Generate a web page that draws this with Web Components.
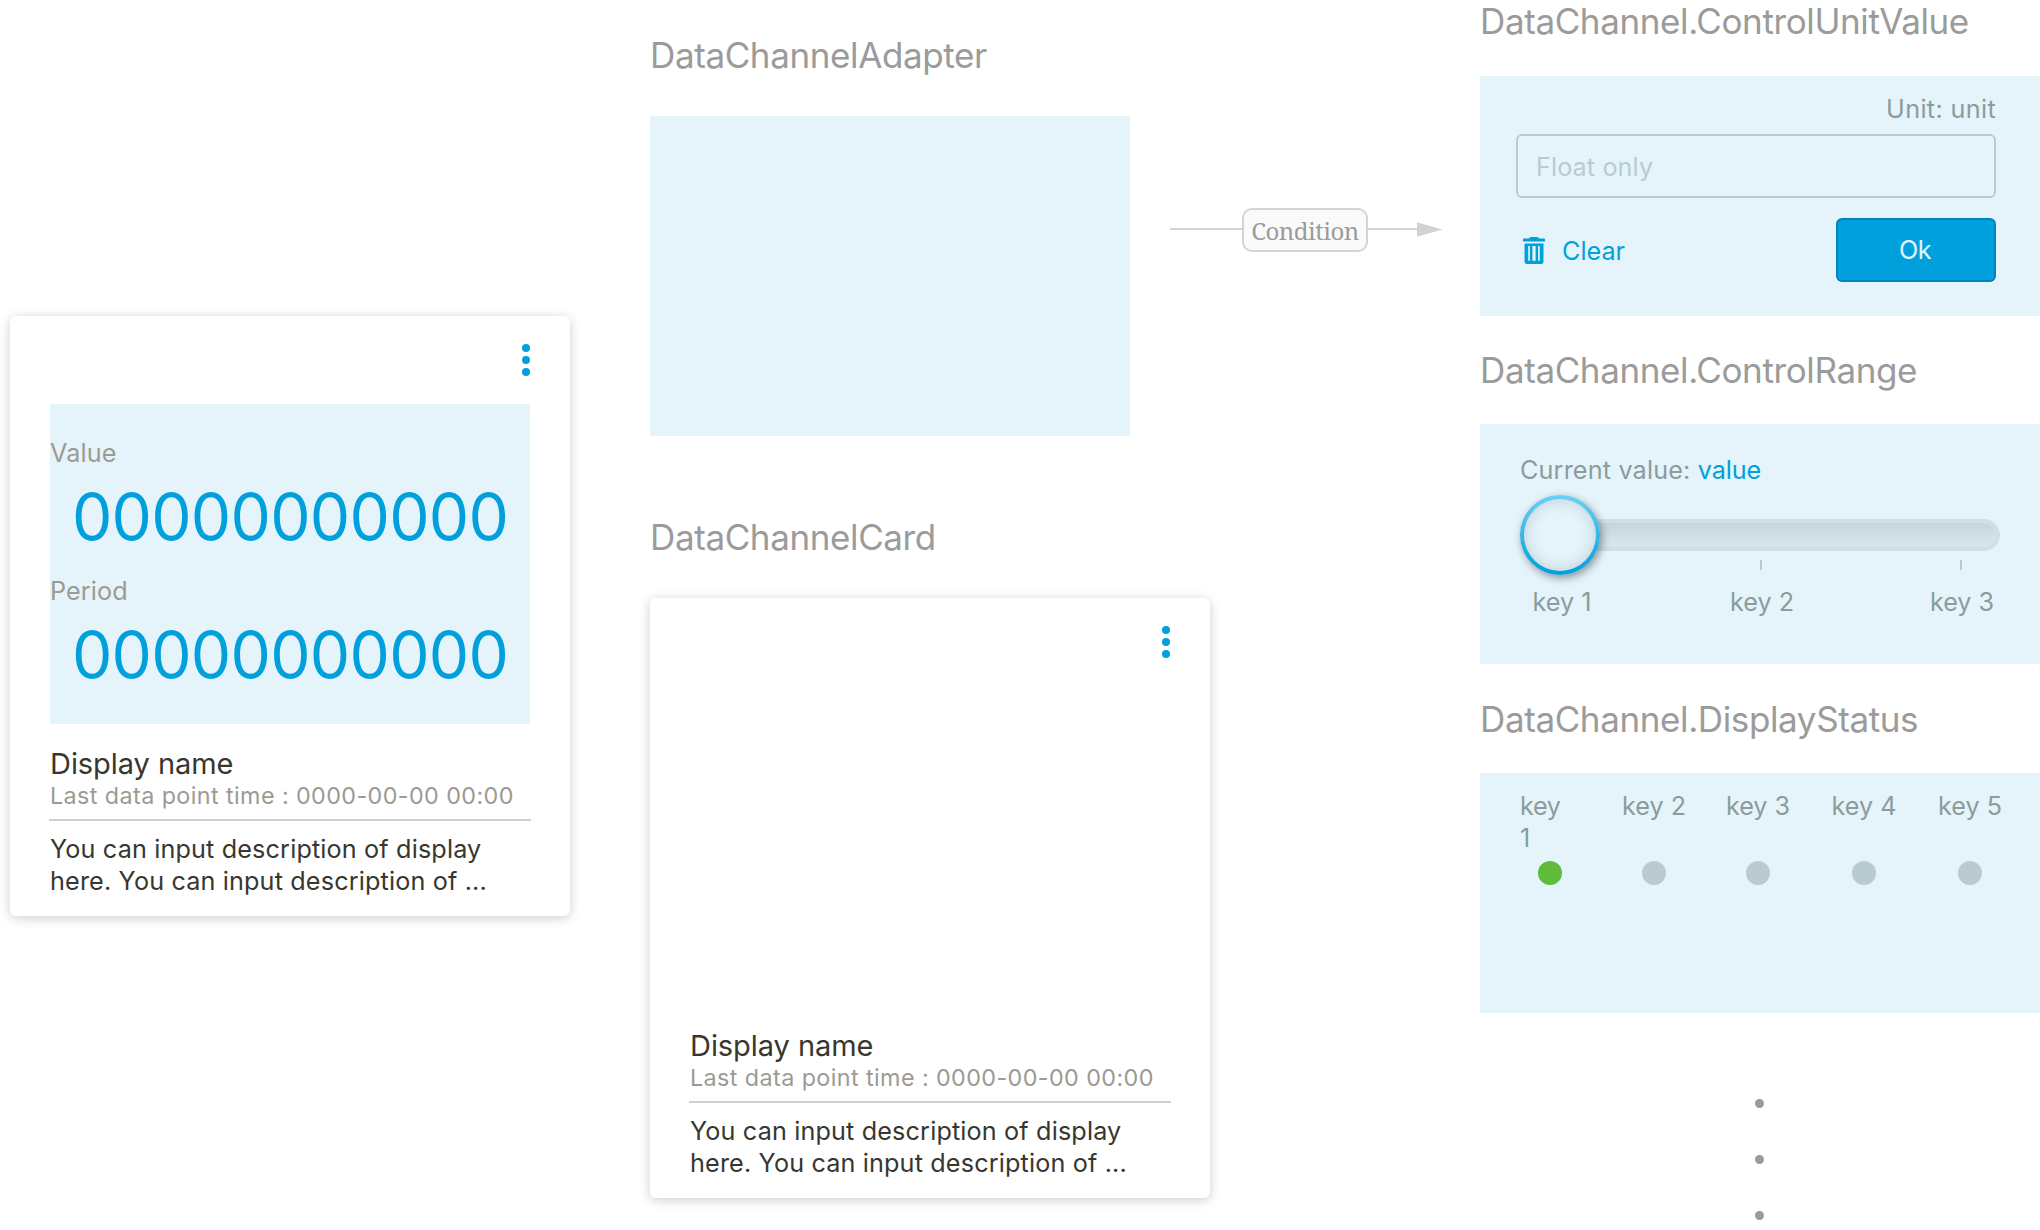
<!DOCTYPE html>
<html lang="en">
<head>
<meta charset="utf-8">
<title>DataChannel components</title>
<style>
  html, body { margin: 0; background: #fff; }
  body { width: 2040px; height: 1230px; overflow: hidden; font-family: Inter, "Liberation Sans", sans-serif; }
</style>
</head>
<body>
<component-board>
  <data-card slot="example">
    <channel-values>
      <channel-value label="Value">00000000000</channel-value>
      <channel-value label="Period">00000000000</channel-value>
    </channel-values>
  </data-card>

  <board-section slot="parts" heading="DataChannelAdapter">
    <adapter-flow condition="Condition"></adapter-flow>
  </board-section>
  <board-section slot="parts" heading="DataChannelCard">
    <data-card></data-card>
  </board-section>

  <board-section slot="variants" heading="DataChannel.ControlUnitValue">
    <control-unit-value unit="unit"></control-unit-value>
  </board-section>
  <board-section slot="variants" heading="DataChannel.ControlRange">
    <control-range></control-range>
  </board-section>
  <board-section slot="variants" heading="DataChannel.DisplayStatus">
    <display-status></display-status>
  </board-section>
  <more-dots slot="variants"></more-dots>
</component-board>

<script>
const define = (name, render) => customElements.define(name, class extends HTMLElement {
  connectedCallback() {
    if (this.shadowRoot) return;
    const t = document.createElement('template');
    t.innerHTML = '<style>:host{display:block;box-sizing:border-box}*{box-sizing:border-box}</style>' + render(this);
    this.attachShadow({ mode: 'open' }).append(t.content.cloneNode(true));
  }
});

define('component-board', () => `
<style>
  :host { display: grid; grid-template-columns: 560px 792px 560px; column-gap: 0; padding-left: 10px; width: 2040px; height: 1230px; align-items: start; }
  .example { padding-top: 316px; }
  .parts { margin-left: 80px; width: 792px; padding-top: 34px; display: flex; flex-direction: column; gap: 80px; --heading-gap: 40px; }
  .variants { margin-left: 118px; width: 560px; display: flex; flex-direction: column; gap: 34px; --heading-gap: 33px; }
</style>
<div class="example"><slot name="example"></slot></div>
<div class="parts"><slot name="parts"></slot></div>
<div class="variants"><slot name="variants"></slot></div>`);

define('board-section', el => `
<style>
  :host { display: flex; flex-direction: column; gap: var(--heading-gap); }
  h2 { margin: 0; font-weight: 400; font-size: 35px; line-height: 42px; letter-spacing: -0.38px; color: #9b9b9b; white-space: nowrap; }
</style>
<h2>${el.getAttribute('heading')}</h2><slot></slot>`);

define('data-card', () => `
<style>
  :host { width: 560px; height: 600px; background: #fff; border-radius: 6px; box-shadow: 0 2px 12px rgba(0,0,0,.2); }
  header { height: 88px; padding: 28px 40px 0; display: flex; justify-content: flex-end; }
  svg { display: block; }
  .body { height: 320px; padding: 0 40px; }
  footer { padding: 22px 39px 0; }
  .name { font-size: 29px; line-height: 35px; letter-spacing: -0.05px; color: #37372f; padding-left: 1px; }
  .time { font-size: 23.3px; line-height: 29px; letter-spacing: .42px; color: #9b9b93; white-space: nowrap; padding-left: 1px; }
  hr { margin: 9px 0 12px; border: 0; height: 2px; background: #d0d0d0; }
  .desc { font-size: 25.2px; line-height: 32px; letter-spacing: .15px; color: #37372f; white-space: nowrap; padding-left: 1px; }
</style>
<header><svg width="8" height="32" viewBox="0 0 8 32" fill="#00a0dd"><circle cx="4" cy="4" r="4"/><circle cx="4" cy="16" r="4"/><circle cx="4" cy="28" r="4"/></svg></header>
<div class="body"><slot></slot></div>
<footer>
  <div class="name">Display name</div>
  <div class="time">Last data point time : 0000-00-00 00:00</div>
  <hr>
  <div class="desc">You can input description of display<br>here. You can input description of ...</div>
</footer>`);

define('channel-values', () => `
<style>
  :host { width: 480px; height: 320px; background: #e5f4fb; padding-top: 33px; display: flex; flex-direction: column; gap: 10px; }
</style><slot></slot>`);

define('channel-value', el => `
<style>
  .label { font-size: 25.2px; line-height: 32px; letter-spacing: .1px; color: #9b9b93; }
  .value { font-size: 64px; line-height: 96px; letter-spacing: -.72px; color: #00a0dd; text-align: center; }
</style>
<div class="label">${el.getAttribute('label')}</div>
<div class="value"><slot></slot></div>`);

define('adapter-flow', el => `
<style>
  :host { display: flex; gap: 40px; height: 320px; }
  .panel { flex: none; width: 480px; background: #e5f4fb; }
  .arrow { flex: none; height: 44px; margin-top: 92px; display: flex; align-items: center; }
  .line { height: 2px; margin-bottom: 2px; background: #d3d4d6; }
  .label { width: 126px; height: 44px; border: 2px solid #d3d4d6; border-radius: 10px; background: #fafafa; padding-top: 1px;
    font: 24px/40px "Noto Serif", "Liberation Serif", serif; letter-spacing: -.5px; color: #9b9b9b; text-align: center; }
  svg { display: block; margin-bottom: 2px; }
</style>
<div class="panel"></div>
<div class="arrow">
  <div class="line" style="width:72px"></div>
  <div class="label">${el.getAttribute('condition')}</div>
  <div class="line" style="width:49px"></div>
  <svg width="26" height="15" viewBox="0 0 26 15"><path d="M0 0.3 L25.5 7.5 L0 14.7Z" fill="#d0d2d4"/></svg>
</div>`);

define('control-unit-value', el => `
<style>
  :host { height: 240px; margin-top: 1px; margin-bottom: -1px; background: #e5f4fb; padding: 17px 44px 0 36px; font-size: 25.2px; line-height: 32px; }
  .unit { text-align: right; color: #8b9c9c; letter-spacing: .35px; margin-bottom: 9px; }
  .input { height: 64px; border: 2px solid #b9cad1; border-radius: 6px; padding: 15px 18px 13px; color: #b9cad1; letter-spacing: .1px; }
  .row { display: flex; justify-content: space-between; margin-top: 20px; height: 64px; align-items: center; }
  .clear { display: flex; align-items: center; color: #00a0dd; padding-left: 7px; gap: 17px; }
  .clear span { padding-top: 1px; }
  svg { display: block; }
  .ok { width: 160px; height: 64px; border: 2px solid #0084bb; border-radius: 6px; background: #00a0dd; color: #e5f4fb; text-align: center; line-height: 61px; letter-spacing: -.6px; padding-right: 2px; }
</style>
<div class="unit">Unit: ${el.getAttribute('unit')}</div>
<div class="input">Float only</div>
<div class="row">
  <div class="clear">
    <svg width="22" height="27" viewBox="0 0 22 27"><g fill="#00a0dd"><path d="M0 2.6Q0 1.6 1 1.6H5.8Q6.6 0 8 0H14Q15.4 0 16.2 1.6H21Q22 1.6 22 2.6V4.6H0Z"/><path fill-rule="evenodd" d="M1.5 6.5H20.5V24.2Q20.5 27 17.7 27H4.3Q1.5 27 1.5 24.2ZM5.2 9V23.8H6.9V9ZM9.4 9V23.8H12.6V9ZM15.1 9V23.8H16.8V9Z"/></g></svg>
    <span>Clear</span>
  </div>
  <div class="ok">Ok</div>
</div>`);

define('control-range', () => `
<style>
  :host { height: 240px; background: #e5f4fb; padding: 30px 40px 0; font-size: 25.2px; line-height: 32px; color: #8b9c9c; }
  .current { letter-spacing: .16px; }
  b { font-weight: 400; color: #00a0dd; letter-spacing: -.1px; }
  .slider { display: grid; align-items: center; width: 480px; height: 80px; margin-top: 9px; }
  .slider > * { grid-area: 1 / 1; }
  .track { height: 32px; border-radius: 16px; border: 4px solid #d0dfe6; background: linear-gradient(#c5d3da, #d5e4eb 75%); background-clip: padding-box; }
  .knob { width: 80px; height: 80px; border-radius: 50%; border: 4px solid transparent;
    background: linear-gradient(#e5f4fb, #e5f4fb) padding-box, linear-gradient(#6ccff6, #00a0dd) border-box;
    box-shadow: 2px 3px 8px rgba(0,0,0,.4), inset 0 0 16px rgba(0,0,0,.16); }
  .scale { display: flex; justify-content: space-between; width: 480px; margin-top: -15px; }
  .stop { width: 80px; padding-left: 2px; display: flex; flex-direction: column; align-items: center; gap: 16px; white-space: nowrap; }
  .stop i { width: 2px; height: 10px; background: #b9cad1; }
  .stop span { padding-left: 2px; }
  .stop:first-child i { visibility: hidden; }
</style>
<div class="current">Current value: <b>value</b></div>
<div class="slider"><div class="track"></div><div class="knob"></div></div>
<div class="scale">
  <div class="stop"><i></i><span>key 1</span></div>
  <div class="stop"><i></i><span>key 2</span></div>
  <div class="stop"><i></i><span>key 3</span></div>
</div>`);

define('display-status', () => `
<style>
  :host { height: 240px; background: #e5f4fb; padding: 17px 18px 0; display: grid; grid-template-columns: 104px 104px 104px 108px 104px; align-content: start; font-size: 25.2px; line-height: 32px; color: #8b9c9c; }
  .item { display: flex; flex-direction: column; align-items: center; justify-content: space-between; height: 95px; white-space: nowrap; }
  .on span { width: 60px; letter-spacing: -.3px; }
  i { width: 24px; height: 24px; border-radius: 50%; background: #b9cad1; }
  .on i { background: #5fbb38; }
</style>
<div class="item on"><span>key<br>1</span><i></i></div>
<div class="item"><span>key 2</span><i></i></div>
<div class="item"><span>key 3</span><i></i></div>
<div class="item"><span>key 4</span><i></i></div>
<div class="item"><span>key 5</span><i></i></div>`);

define('more-dots', () => `
<style>
  :host { display: flex; flex-direction: column; align-items: center; gap: 47px; padding: 52px 1px 0 0; }
  i { width: 9px; height: 9px; border-radius: 50%; background: #9b9b9b; }
</style><i></i><i></i><i></i>`);
</script>
</body>
</html>
